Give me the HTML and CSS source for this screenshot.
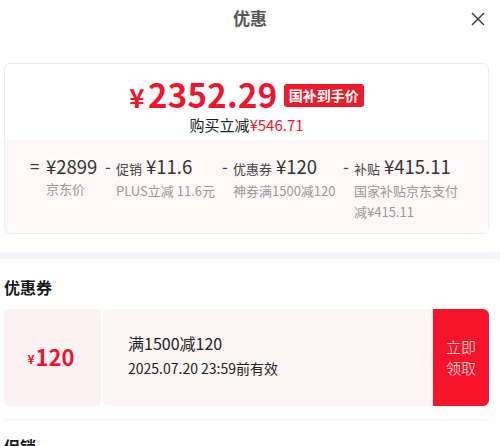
FILE: index.html
```html
<!DOCTYPE html>
<html lang="zh">
<head>
  <meta charset="UTF-8">
  <meta name="viewport" content="width=device-width, initial-scale=1.0">
  <title>优惠</title>
  <link rel="stylesheet" href="styles.css">
</head>
<body>
  <div id="panel">
    <header class="top">
      <span class="title">优惠</span>
      <span class="close">
        <svg width="16" height="16" viewBox="0 0 16 16"><path d="M2 2 L14 14 M14 2 L2 14" stroke="#333" stroke-width="1.4" fill="none"/></svg>
      </span>
    </header>

    <div class="wrap">
      <!-- 到手价 -->
      <div class="priceCard">
        <div class="priceTop">
          <div class="priceLine">
            <span class="final"><span class="yen">¥</span>2352.29</span>
            <span class="badge">国补到手价</span>
          </div>
          <div class="save">购买立减<span class="red">¥546.71</span></div>
        </div>
        <div class="priceBottom">
          <div class="col c1">
            <span class="sign">=</span>
            <div class="body">
              <div class="amt"><span class="num">¥2899</span></div>
              <div class="note">京东价</div>
            </div>
          </div>
          <div class="col c2">
            <span class="sign">-</span>
            <div class="body">
              <div class="amt"><span class="lab">促销</span><span class="num">¥11.6</span></div>
              <div class="note">PLUS立减 11.6元</div>
            </div>
          </div>
          <div class="col c3">
            <span class="sign">-</span>
            <div class="body">
              <div class="amt"><span class="lab">优惠券</span><span class="num">¥120</span></div>
              <div class="note">神券满1500减120</div>
            </div>
          </div>
          <div class="col c4">
            <span class="sign">-</span>
            <div class="body">
              <div class="amt"><span class="lab">补贴</span><span class="num">¥415.11</span></div>
              <div class="note">国家补贴京东支付减¥415.11</div>
            </div>
          </div>
        </div>
      </div>
    </div>

    <div class="band"></div>

    <div class="wrap">
      <h2>优惠券</h2>
      <div class="coupon">
        <div class="cLeft"><span class="y">¥</span>120</div>
        <div class="cMid">
          <div class="cTitle">满1500减120</div>
          <div class="cDate">2025.07.20 23:59前有效</div>
        </div>
        <div class="cBtn">立即<br>领取</div>
      </div>
      <div class="line"></div>
      <h2 class="promo">促销</h2>
    </div>
  </div>
</body>
</html>
```

FILE: styles.css
```css
body{
  margin: 0;
  background: #fff;
  font-family: "Noto Sans CJK SC", "Noto Sans", sans-serif;
  color: #1a1a1a;
  overflow: hidden;
}
#panel{
  width: 500px;
}
/* 头部 */
.top{
  height: 37px;
  display: flex;
  align-items: center;
  justify-content: center;
  position: relative;
}
.title{
  font-size: 17px;
  font-weight: bold;
  color: #555;
  margin-top: -2px;
}
.close{
  position: absolute;
  right: 14px;
  top: 11px;
  line-height: 0;
}
.wrap{
  padding: 0 11px 0 4px;
}
/* 价格卡片 */
.priceCard{
  margin-top: 26px;
  border: 1px solid #eeeeee;
  border-radius: 6px;
  overflow: hidden;
}
.priceTop{
  height: 76px;
  display: flex;
  flex-direction: column;
  align-items: center;
}
.priceLine{
  display: flex;
  align-items: center;
  margin-top: 12px;
  height: 38px;
}
.final{
  color: #f0142d;
  font-size: 33px;
  line-height: 38px;
  font-weight: 600;
  letter-spacing: 0.3px;
}
.yen{
  font-size: 26px;
  margin-right: 3px;
}
.badge{
  background: #ee1a2d;
  color: #fff;
  font-size: 14px;
  font-weight: bold;
  padding: 0 5px;
  height: 23px;
  line-height: 23px;
  border-radius: 3px;
  margin-left: 6px;
}
.save{
  font-size: 15px;
  line-height: 20px;
  color: #222;
  margin-top: 1px;
}
.red{
  color: #f0142d;
}
.priceBottom{
  background: #fdf7f7;
  height: 93px;
  display: flex;
  padding-top: 14px;
  box-sizing: border-box;
}
.col{
  display: flex;
}
.sign{
  font-size: 17px;
  color: #444;
  line-height: 24px;
  width: 11px;
}
.c1{
  margin-left: 25px;
}
.c1 .sign{
  width: 16px;
}
.c1 .body{ width: 59px; }
.c2 .body{ width: 106px; }
.c3 .body{ width: 110px; }
.c4 .body{ width: 112px; }
.amt{
  line-height: 24px;
  white-space: nowrap;
}
.lab{
  font-size: 13px;
  color: #444;
  margin-right: 4px;
}
.num{
  font-size: 18.5px;
  color: #333;
}
.note{
  font-size: 13px;
  color: #999;
  line-height: 21px;
  margin-top: -1px;
}
.c2 .note,
.c3 .note{
  white-space: nowrap;
}
/* 分隔 */
.band{
  margin-top: 18px;
  height: 7px;
  background: #f4f6f9;
}
h2{
  font-size: 16px;
  margin: 0;
  line-height: 24px;
  padding-top: 16px;
  color: #1a1a1a;
}
/* 优惠券 */
.coupon{
  margin-top: 10px;
  height: 97px;
  display: flex;
}
.cLeft{
  width: 97px;
  background: #fdf2f3;
  border-radius: 5px;
  display: flex;
  align-items: center;
  justify-content: center;
  color: #f0142d;
  font-size: 22px;
  font-weight: 600;
  padding-bottom: 3px;
  padding-right: 3px;
  box-sizing: border-box;
}
.y{
  font-size: 12px;
  margin-right: 1px;
  margin-top: 5px;
}
.cMid{
  flex: 1;
  margin-left: 2px;
  background: #fdf5f6;
  border-radius: 5px 0 0 5px;
  display: flex;
  flex-direction: column;
  justify-content: center;
  padding-left: 25px;
  padding-bottom: 3px;
}
.cTitle{
  font-size: 16px;
  line-height: 25px;
  color: #222;
}
.cDate{
  font-size: 14px;
  line-height: 25px;
  color: #222;
}
.cBtn{
  width: 56px;
  background: #f5142a;
  border-radius: 0 6px 6px 0;
  color: #fce6e8;
  font-size: 15px;
  line-height: 21px;
  display: flex;
  align-items: center;
  justify-content: center;
  text-align: center;
  font-weight: 300;
  padding-bottom: 2px;
  box-sizing: border-box;
}
.line{
  margin-top: 13px;
  height: 1px;
  background: #f2f2f2;
}
.promo{
  padding-top: 14px;
}
```
